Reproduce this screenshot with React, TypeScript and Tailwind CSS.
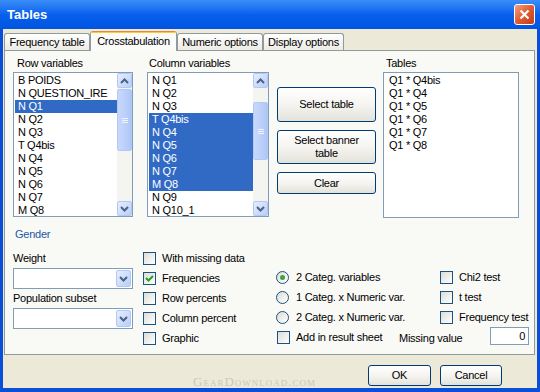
import { ReactNode } from 'react'

const rowVars = ['B POIDS', 'N QUESTION_IRE', 'N Q1', 'N Q2', 'N Q3', 'T Q4bis', 'N Q4', 'N Q5', 'N Q6', 'N Q7', 'M Q8']
const colVars = ['N Q1', 'N Q2', 'N Q3', 'T Q4bis', 'N Q4', 'N Q5', 'N Q6', 'N Q7', 'M Q8', 'N Q9', 'N Q10_1']
const tableList = ['Q1 * Q4bis', 'Q1 * Q4', 'Q1 * Q5', 'Q1 * Q6', 'Q1 * Q7', 'Q1 * Q8']

const Chevron = ({ up }: { up?: boolean }) => (
	<svg width="9" height="6" viewBox="0 0 9 6">
		<path
			d={up ? 'M1 5 L4.5 1.5 L8 5' : 'M1 1 L4.5 4.5 L8 1'}
			fill="none"
			stroke="#4d6185"
			strokeWidth="2"
		/>
	</svg>
)

const ScrollBtn = ({ up }: { up?: boolean }) => (
	<div className="h-[15px] w-[15px] flex items-center justify-center rounded-[2px] border border-[#b4c8f6] bg-gradient-to-br from-[#e6eefd] to-[#b8cef9]">
		<Chevron up={up} />
	</div>
)

const Scrollbar = ({ thumb }: { thumb: string }) => (
	<div className="w-[15px] h-full flex flex-col bg-[#f4f4f0]">
		<ScrollBtn up />
		<div className="flex-1">
			<div
				className={`${thumb} w-[15px] flex flex-col items-center justify-center gap-[1px] rounded-[2px] border border-[#b4c8f6] bg-gradient-to-r from-[#c8d8fb] via-[#bcd0fa] to-[#aec6f7]`}
			>
				<div className="w-[6px] h-[1px] bg-[#eef3fe]" />
				<div className="w-[6px] h-[1px] bg-[#eef3fe]" />
				<div className="w-[6px] h-[1px] bg-[#eef3fe]" />
			</div>
		</div>
		<ScrollBtn />
	</div>
)

const ListBox = ({
	items,
	selected,
	thumb,
	className,
}: {
	items: string[]
	selected: string[]
	thumb: string
	className: string
}) => (
	<div className={`${className} h-[145px] flex border border-[#7f9db9] bg-white`}>
		<div className="flex-1 pt-[1px] pl-[1px]">
			{items.map((item) => (
				<div
					key={item}
					className={`h-[13px] leading-[13px] pl-[3px] ${
						selected.includes(item) ? 'bg-[#316ac5] text-white' : 'text-black'
					}`}
				>
					{item}
				</div>
			))}
		</div>
		<Scrollbar thumb={thumb} />
	</div>
)

const XpButton = ({ children, className }: { children: ReactNode; className: string }) => (
	<button
		type="button"
		className={`${className} flex items-center justify-center text-center leading-[13px] rounded-[3px] border border-[#003c74] bg-gradient-to-b from-white via-[#f5f4f0] to-[#e3e2da] text-black`}
	>
		{children}
	</button>
)

const Checkbox = ({ checked }: { checked?: boolean }) => (
	<div className="w-[13px] h-[13px] shrink-0 flex items-center justify-center border border-[#1c5180] bg-gradient-to-br from-[#dcdcd7] to-white">
		{checked && (
			<svg width="9" height="9" viewBox="0 0 9 9">
				<path d="M1 4 L3.5 6.5 L8 2" fill="none" stroke="#21a121" strokeWidth="2" />
			</svg>
		)}
	</div>
)

const Radio = ({ checked }: { checked?: boolean }) => (
	<div className="w-[13px] h-[13px] shrink-0 flex items-center justify-center rounded-full border border-[#1c5180] bg-gradient-to-br from-[#dcdcd7] to-white">
		{checked && <div className="w-[5px] h-[5px] rounded-full bg-[#3fa43f]" />}
	</div>
)

const CheckRow = ({ label, checked, className }: { label: string; checked?: boolean; className?: string }) => (
	<div className={`${className ?? ''} h-[20px] flex items-center gap-[6px] whitespace-nowrap`}>
		<Checkbox checked={checked} />
		<span>{label}</span>
	</div>
)

const RadioRow = ({ label, checked }: { label: string; checked?: boolean }) => (
	<div className="w-[164px] flex items-center gap-[7px] whitespace-nowrap">
		<Radio checked={checked} />
		<span>{label}</span>
	</div>
)

const Combo = () => (
	<div className="w-[120px] h-[21px] flex items-center justify-end pr-[1px] border border-[#7f9db9] bg-white">
		<div className="w-[15px] h-[17px] flex items-center justify-center rounded-[2px] border border-[#b4c8f6] bg-gradient-to-br from-[#e6eefd] to-[#b8cef9]">
			<Chevron />
		</div>
	</div>
)

const Tab = ({ label, width, active }: { label: string; width: string; active?: boolean }) =>
	active ? (
		<div
			className={`${width} h-[20px] relative z-10 -mb-[1px] flex flex-col border-x border-[#919b9c] rounded-t-[3px] bg-[#fbfbf9] overflow-hidden`}
		>
			<div className="h-[1px] bg-[#e68b2c]" />
			<div className="h-[2px] bg-[#ffc83c]" />
			<div className="flex-1 flex items-center justify-center pb-[2px]">{label}</div>
		</div>
	) : (
		<div
			className={`${width} h-[17px] flex items-center justify-center border border-b-0 border-[#919b9c] rounded-t-[3px] bg-gradient-to-b from-white to-[#ecebe5]`}
		>
			{label}
		</div>
	)

export default function App() {
	return (
		<div className="w-[540px] h-[392px] flex flex-col bg-[#0a4fd8] text-[11px] tracking-[-0.25px] text-black font-['Liberation_Sans',Arial,sans-serif]">
			{/* title bar */}
			<div className="h-[29px] flex items-center justify-between pl-[7px] pr-[5px] bg-gradient-to-b from-[#3a8ef8] via-[#0860ec] to-[#0054e0]">
				<span className="text-[13px] font-bold tracking-normal text-white">Tables</span>
				<div className="w-[21px] h-[21px] flex items-center justify-center rounded-[3px] border border-white bg-gradient-to-br from-[#f0a080] via-[#e05a30] to-[#c23d12]">
					<svg width="11" height="11" viewBox="0 0 11 11">
						<path d="M1.5 1.5 L9.5 9.5 M9.5 1.5 L1.5 9.5" stroke="white" strokeWidth="2.2" />
					</svg>
				</div>
			</div>

			<div className="flex-1 mx-[3px] mb-[4px] flex flex-col bg-[#ece9d8] relative">
				{/* tabs */}
				<div className="h-[20px] mt-[1px] pl-[1px] flex items-end">
					<Tab label="Frequency table" width="w-[86px]" />
					<Tab label="Crosstabulation" width="w-[87px]" active />
					<Tab label="Numeric options" width="w-[86px]" />
					<Tab label="Display options" width="w-[81px]" />
				</div>

				{/* tab page */}
				<div className="h-[305px] ml-[1px] mr-[2px] border border-[#919b9c] bg-[#f9f9f6]">
					<div className="flex">
						<div className="ml-[8px] w-[120px] pt-[5px]">
							<div className="h-[16px] leading-[14px] pl-[4px]">Row variables</div>
							<ListBox
								items={rowVars}
								selected={['N Q1']}
								thumb="mt-[1px] h-[62px]"
								className="w-[120px]"
							/>
						</div>
						<div className="ml-[14px] w-[122px] pt-[5px]">
							<div className="h-[16px] leading-[14px] pl-[2px]">Column variables</div>
							<ListBox
								items={colVars}
								selected={['T Q4bis', 'N Q4', 'N Q5', 'N Q6', 'N Q7', 'M Q8']}
								thumb="mt-[14px] h-[58px]"
								className="w-[122px]"
							/>
						</div>
						<div className="ml-[8px] w-[99px] pt-[36px] flex flex-col">
							<XpButton className="h-[35px]">Select table</XpButton>
							<XpButton className="h-[34px] mt-[8px]">
								Select banner
								<br />
								table
							</XpButton>
							<XpButton className="h-[22px] mt-[8px]">Clear</XpButton>
						</div>
						<div className="ml-[7px] w-[136px] pt-[5px]">
							<div className="h-[16px] leading-[14px] pl-[3px]">Tables</div>
							<div className="h-[146px] border border-[#7f9db9] bg-white pt-[1px] pl-[5px]">
								{tableList.map((t) => (
									<div key={t} className="h-[13px] leading-[13px]">
										{t}
									</div>
								))}
							</div>
						</div>
					</div>

					<div className="flex">
						<div className="ml-[8px] w-[120px] flex flex-col">
							<div className="mt-[10px] h-[13px] leading-[13px] pl-[2px] text-[#2158a8]">Gender</div>
							<div className="mt-[11px] h-[13px] leading-[13px]">Weight</div>
							<div className="mt-[3px]">
								<Combo />
							</div>
							<div className="mt-[3px] h-[13px] leading-[13px]">Population subset</div>
							<div className="mt-[3px]">
								<Combo />
							</div>
						</div>
						<div className="ml-[10px] w-[133px] pt-[30px] flex flex-col">
							<CheckRow label="With missing data" />
							<CheckRow label="Frequencies" checked />
							<CheckRow label="Row percents" />
							<CheckRow label="Column percent" />
							<CheckRow label="Graphic" />
						</div>
						<div className="w-[253px] pt-[49px] flex flex-col">
							<div className="h-[20px] flex items-center">
								<RadioRow label="2 Categ. variables" checked />
								<CheckRow label="Chi2 test" />
							</div>
							<div className="h-[20px] flex items-center">
								<RadioRow label="1 Categ. x Numeric var." />
								<CheckRow label="t test" />
							</div>
							<div className="h-[20px] flex items-center">
								<RadioRow label="2 Categ. x Numeric var." />
								<CheckRow label="Frequency test" />
							</div>
							<div className="h-[20px] flex items-center pl-[1px]">
								<CheckRow label="Add in result sheet" className="w-[122px]" />
								<span className="mt-[2px] whitespace-nowrap">Missing value</span>
								<div className="ml-auto mb-[2px] w-[39px] h-[18px] flex items-center justify-end pr-[3px] border border-[#7f9db9] bg-white">
									0
								</div>
							</div>
						</div>
					</div>
				</div>

				{/* footer */}
				<div className="flex justify-end gap-[9px] pr-[35px] mt-[10px]">
					<XpButton className="w-[63px] h-[21px]">OK</XpButton>
					<XpButton className="w-[62px] h-[21px]">Cancel</XpButton>
				</div>
				<span className="absolute left-[190px] bottom-[-3px] font-['Liberation_Serif',serif] text-[13px] tracking-[1px] text-[#c9c7bd] [font-variant:small-caps]">
					GearDownload.com
				</span>
			</div>
		</div>
	)
}
